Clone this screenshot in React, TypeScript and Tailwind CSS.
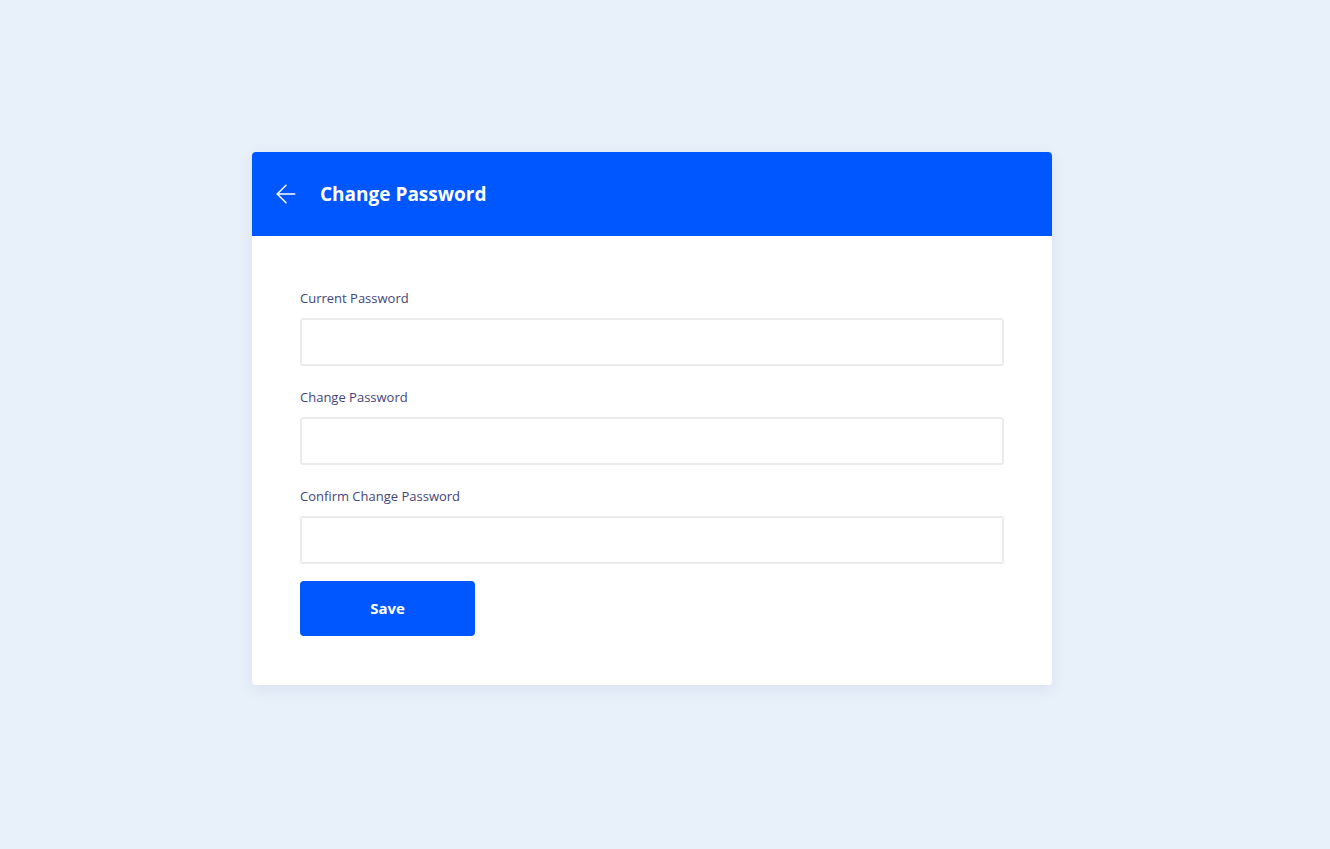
import { ArrowLeft } from 'lucide-react';

const FIELDS = ['Current Password', 'Change Password', 'Confirm Change Password'];

export default function App() {
  return (
    <div className="flex min-h-screen justify-center bg-[#e8f0fa] pt-[152px] pr-[26px] font-['Open_Sans',sans-serif]">
      <div className="h-fit w-[800px] rounded-[4px] bg-white shadow-[0_4px_16px_rgba(40,70,130,0.08)]">
        {/* Header */}
        <div className="flex h-[84px] items-center gap-[19px] rounded-t-[4px] bg-[#0057ff] px-[19px] text-white">
          <ArrowLeft className="h-[30px] w-[30px]" strokeWidth={1.2} />
          <h1 className="text-[19px] font-bold">Change Password</h1>
        </div>

        {/* Form */}
        <div className="flex flex-col px-[48px] pt-[52px] pb-[49px]">
          {FIELDS.map((label, i) => (
            <div key={label} className={i < FIELDS.length - 1 ? 'mb-[21px]' : 'mb-[17px]'}>
              <label className="block text-[13px] leading-[20px] text-[#45457a]">{label}</label>
              <input
                type="password"
                className="mt-[10px] block h-[48px] w-full rounded-[3px] border-2 border-[#ebebeb] bg-white px-3 outline-none"
              />
            </div>
          ))}
          <button className="h-[55px] w-[175px] rounded-[4px] bg-[#0057ff] text-[15px] font-bold text-white">
            Save
          </button>
        </div>
      </div>
    </div>
  );
}
